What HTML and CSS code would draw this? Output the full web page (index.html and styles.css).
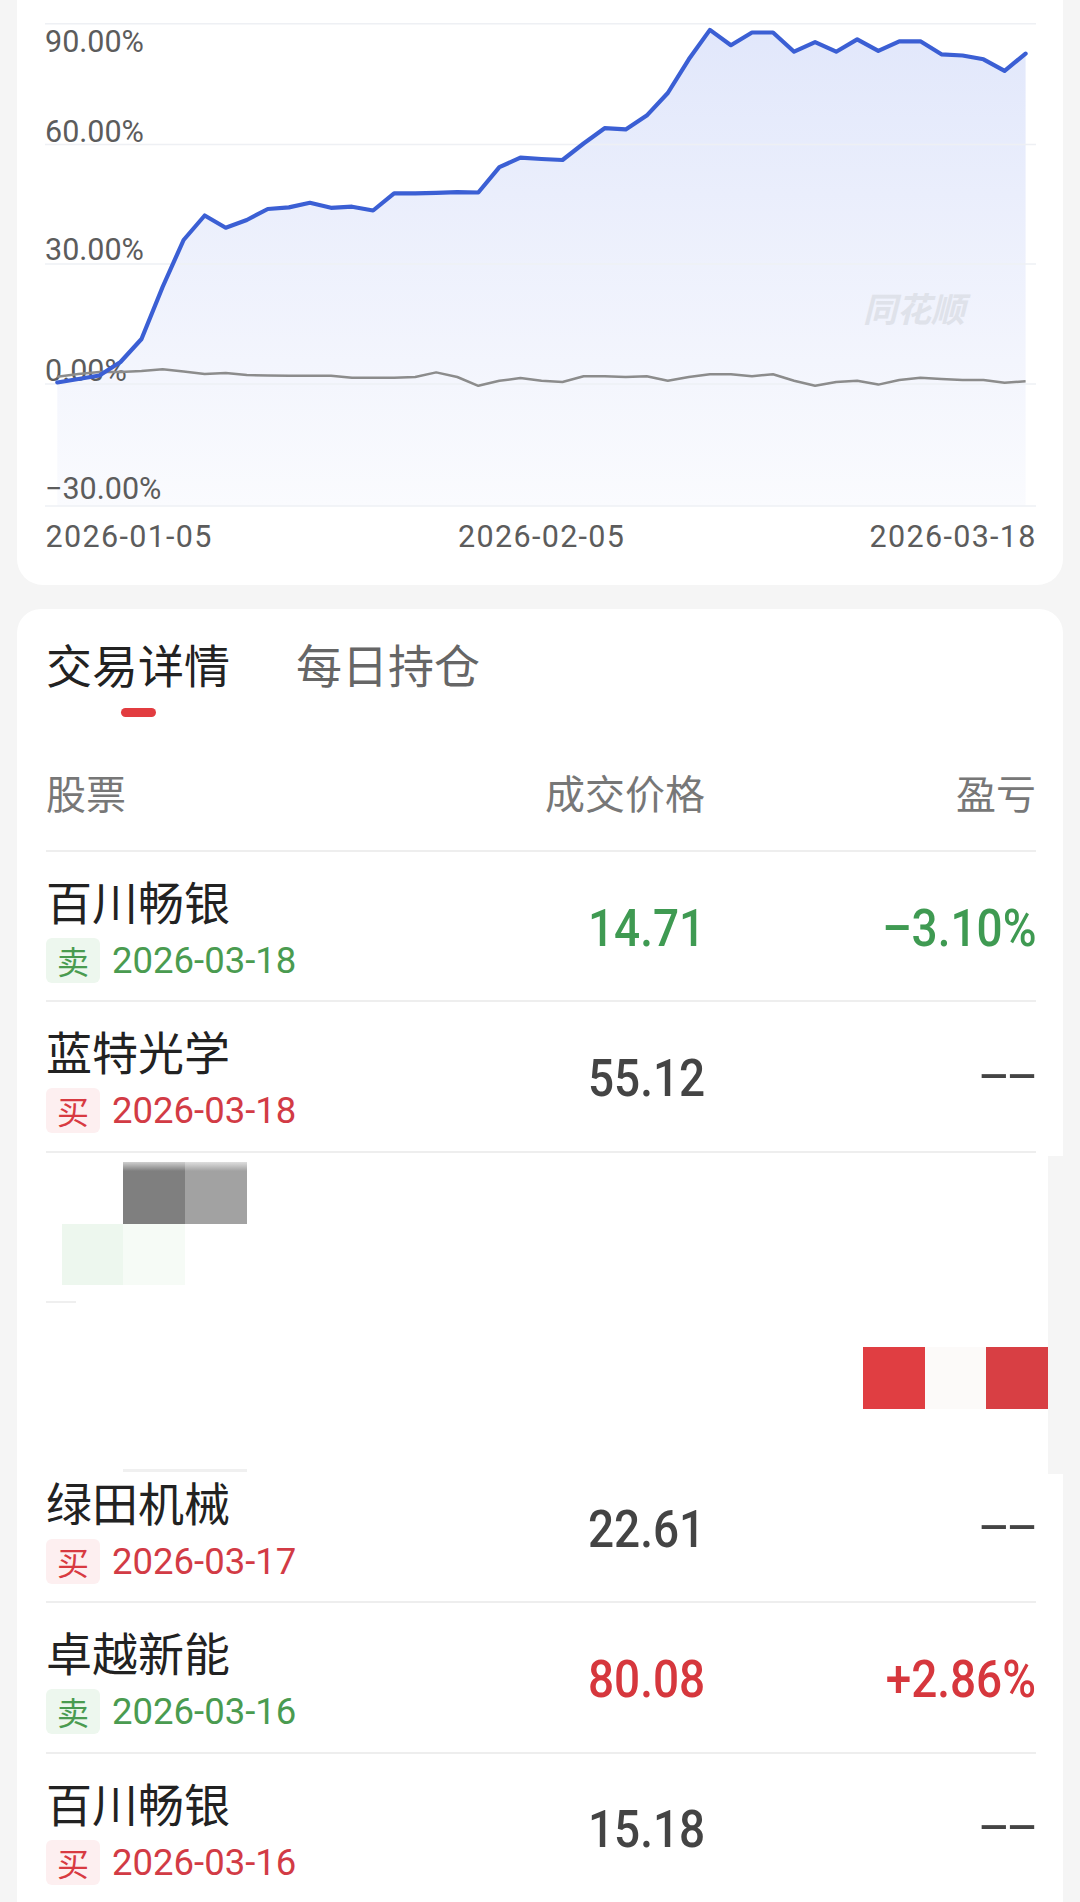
FILE: index.html
```html
<!DOCTYPE html>
<html lang="zh-CN">
<head>
<meta charset="utf-8">
<title>交易详情</title>
<link rel="stylesheet" href="styles.css">
</head>
<body>
<div class="page">
  <section class="card chart-card">
    <svg class="chart" viewBox="17 0 1046 585" width="1046" height="585" xmlns="http://www.w3.org/2000/svg">
      <defs>
        <linearGradient id="fillGrad" gradientUnits="userSpaceOnUse" x1="0" y1="24" x2="0" y2="506">
          <stop offset="0" stop-color="#e1e7fb"/>
          <stop offset="0.7" stop-color="#f3f5fd"/>
          <stop offset="1" stop-color="#fafbfe"/>
        </linearGradient>
      </defs>
      <path class="area" d="M57.3,382.5 L78.4,379 L99.4,375.5 L120.5,362 L141.5,339 L162.6,287 L183.6,240 L204.7,215.5 L225.7,227.7 L246.8,220 L267.8,209 L288.9,207.4 L309.9,202.8 L331,207.8 L352,206.7 L373.1,210.5 L394.1,193.3 L415.2,193.3 L436.2,192.9 L457.3,192.1 L478.3,192.5 L499.4,167.2 L520.4,157.7 L541.5,159 L562.5,160 L583.6,143.5 L604.6,128.2 L625.7,129.4 L646.7,115.6 L667.8,93 L688.8,59.3 L709.9,29.9 L730.9,45.2 L752,32.5 L773,32.5 L794.1,51.7 L815.1,42.1 L836.2,51.7 L857.2,39.4 L878.3,50.9 L899.3,41.3 L920.4,41.3 L941.4,54.3 L962.5,55.5 L983.5,59.3 L1004.6,70.8 L1025.6,53.6 L1025.6,505.9 L57.3,505.9 Z"/>
      <g class="grid">
        <line x1="45" y1="23.7" x2="1036" y2="23.7"/>
        <line x1="45" y1="144.5" x2="1036" y2="144.5"/>
        <line x1="45" y1="264" x2="1036" y2="264"/>
        <line x1="45" y1="384" x2="1036" y2="384"/>
        <line x1="45" y1="505.9" x2="1036" y2="505.9"/>
      </g>
      <text class="watermark" x="863" y="322">同花顺</text>
      <g class="axis">
        <text x="45" y="51.7">90.00%</text>
        <text x="45" y="141.6">60.00%</text>
        <text x="45" y="260.2">30.00%</text>
        <text x="45" y="380.8">0.00%</text>
        <text x="45" y="499.4">−30.00%</text>
        <text x="45.5" y="547" textLength="166" lengthAdjust="spacing">2026-01-05</text>
        <text x="458" y="547" textLength="166" lengthAdjust="spacing">2026-02-05</text>
        <text x="869.5" y="547" textLength="166" lengthAdjust="spacing">2026-03-18</text>
      </g>
      <polyline class="bench" points="57.3,376.7 78.4,374 99.4,372 120.5,372 141.5,371 162.6,369.3 183.6,371.5 204.7,373.9 225.7,373 246.8,375 267.8,375.5 288.9,375.8 309.9,375.8 331,375.8 352,377.7 373.1,377.7 394.1,377.7 415.2,377 436.2,372.4 457.3,377 478.3,385.8 499.4,380.8 520.4,378 541.5,380.8 562.5,382 583.6,376.2 604.6,376.2 625.7,377 646.7,376.2 667.8,380.8 688.8,377 709.9,374.3 730.9,374.3 752,376.2 773,374.3 794.1,380.8 815.1,385.8 836.2,382 857.2,380.8 878.3,384.6 899.3,380 920.4,377.7 941.4,378.9 962.5,380 983.5,380 1004.6,382.7 1025.6,381.2"/>
      <polyline class="profit" points="57.3,382.5 78.4,379 99.4,375.5 120.5,362 141.5,339 162.6,287 183.6,240 204.7,215.5 225.7,227.7 246.8,220 267.8,209 288.9,207.4 309.9,202.8 331,207.8 352,206.7 373.1,210.5 394.1,193.3 415.2,193.3 436.2,192.9 457.3,192.1 478.3,192.5 499.4,167.2 520.4,157.7 541.5,159 562.5,160 583.6,143.5 604.6,128.2 625.7,129.4 646.7,115.6 667.8,93 688.8,59.3 709.9,29.9 730.9,45.2 752,32.5 773,32.5 794.1,51.7 815.1,42.1 836.2,51.7 857.2,39.4 878.3,50.9 899.3,41.3 920.4,41.3 941.4,54.3 962.5,55.5 983.5,59.3 1004.6,70.8 1025.6,53.6"/>
    </svg>
  </section>

  <section class="card trades-card">
    <div class="tabs">
      <div class="tab active">交易详情<span class="tab-bar"></span></div>
      <div class="tab">每日持仓</div>
    </div>

    <div class="thead">
      <div>股票</div>
      <div class="num">成交价格</div>
      <div class="num">盈亏</div>
    </div>

    <div class="trow">
      <div class="stock">
        <div class="name">百川畅银</div>
        <div class="meta"><span class="badge sell">卖</span><span class="date sell">2026-03-18</span></div>
      </div>
      <div class="price down"><span class="fig">14.71</span></div>
      <div class="price down"><span class="fig">–3.10%</span></div>
    </div>

    <div class="trow">
      <div class="stock">
        <div class="name">蓝特光学</div>
        <div class="meta"><span class="badge buy">买</span><span class="date buy">2026-03-18</span></div>
      </div>
      <div class="price flat"><span class="fig">55.12</span></div>
      <div class="price flat"><span class="fig nil">--</span></div>
    </div>

    <div class="censored">
      <span class="tile t-dark"></span>
      <span class="tile t-grey"></span>
      <span class="tile t-green1"></span>
      <span class="tile t-green2"></span>
      <span class="tile t-red1"></span>
      <span class="tile t-pale"></span>
      <span class="tile t-red2"></span>
      <span class="frag"></span>
      <span class="frag-low"></span>
      <span class="edge"></span>
    </div>

    <div class="trow">
      <div class="stock">
        <div class="name">绿田机械</div>
        <div class="meta"><span class="badge buy">买</span><span class="date buy">2026-03-17</span></div>
      </div>
      <div class="price flat"><span class="fig">22.61</span></div>
      <div class="price flat"><span class="fig nil">--</span></div>
    </div>

    <div class="trow">
      <div class="stock">
        <div class="name">卓越新能</div>
        <div class="meta"><span class="badge sell">卖</span><span class="date sell">2026-03-16</span></div>
      </div>
      <div class="price up"><span class="fig">80.08</span></div>
      <div class="price up"><span class="fig">+2.86%</span></div>
    </div>

    <div class="trow">
      <div class="stock">
        <div class="name">百川畅银</div>
        <div class="meta"><span class="badge buy">买</span><span class="date buy">2026-03-16</span></div>
      </div>
      <div class="price flat"><span class="fig">15.18</span></div>
      <div class="price flat"><span class="fig nil">--</span></div>
    </div>
  </section>
</div>
</body>
</html>
```

FILE: styles.css
```css
html, body {
  margin: 0;
  padding: 0;
  background: #f5f5f5;
  overflow: hidden;
}

body {
  font-family: "Noto Sans CJK SC", "Noto Sans", sans-serif;
  color: #222;
}

.page {
  width: 1080px;
  height: 1902px;
  overflow: hidden;
}

.card {
  background: #fff;
  margin: 0 17px;
}

/* ---------- chart card ---------- */
.chart-card {
  height: 585px;
  border-radius: 0 0 26px 26px;
}

.chart {
  display: block;
}

.area {
  fill: url(#fillGrad);
}

.grid line {
  stroke: #eef0f4;
  stroke-width: 1.5;
}

.watermark {
  font-family: "Noto Sans CJK SC", sans-serif;
  font-size: 34px;
  font-weight: 700;
  font-style: italic;
  fill: #dfe2ea;
}

.axis text {
  font-family: Roboto, "Noto Sans", sans-serif;
  font-size: 30.5px;
  fill: #5c5c5c;
}

.bench {
  fill: none;
  stroke: #8c8c8c;
  stroke-width: 2.5;
  stroke-linejoin: round;
}

.profit {
  fill: none;
  stroke: #3b5fd4;
  stroke-width: 4.2;
  stroke-linejoin: round;
  stroke-linecap: round;
}

/* ---------- trades card ---------- */
.trades-card {
  margin-top: 24px;
  border-radius: 24px 24px 0 0;
  padding: 24px 27px 0 29px;
}

.tabs {
  display: flex;
  align-items: flex-start;
  gap: 66px;
}

.tab {
  display: flex;
  flex-direction: column;
  align-items: center;
  font-size: 46px;
  line-height: 60px;
  color: #666;
}

.tab.active {
  color: #222;
}

.tab-bar {
  width: 35px;
  height: 9px;
  border-radius: 4.5px;
  background: #e23c40;
  margin-top: 15px;
}

.thead {
  display: grid;
  grid-template-columns: 1fr 260px 331px;
  margin-top: 51px;
  padding-bottom: 34px;
  border-bottom: 2px solid #eeeeee;
  font-size: 40px;
  line-height: 48px;
  color: #777;
}

.num {
  text-align: right;
}

.trow {
  display: grid;
  grid-template-columns: 1fr 260px 331px;
  align-items: center;
  padding: 22px 0 17.3px;
  border-bottom: 2px solid #eeeeee;
}

.name {
  font-size: 46px;
  line-height: 52px;
  color: #222;
}

.meta {
  display: flex;
  align-items: center;
  height: 45px;
  margin-top: 12px;
}

.badge {
  width: 54px;
  height: 45px;
  border-radius: 6px;
  display: flex;
  align-items: center;
  justify-content: center;
  font-size: 32px;
  line-height: 45px;
}

.badge.sell {
  background: #edf7ee;
  color: #4a9b50;
}

.badge.buy {
  background: #fdeff0;
  color: #d83a41;
}

.date {
  font-family: Roboto, "Noto Sans", sans-serif;
  font-size: 36.5px;
  line-height: 45px;
  margin-left: 12px;
}

.date.sell {
  color: #4a9b50;
}

.date.buy {
  color: #d23b45;
}

.price {
  font-family: Roboto, "Noto Sans", sans-serif;
  font-weight: 500;
  font-size: 51px;
  line-height: 60px;
  text-align: right;
}

.fig {
  display: inline-block;
  transform: scaleX(0.9);
  transform-origin: right center;
}

.price.down {
  color: #3f9a52;
}

.price.up {
  color: #d6373d;
}

.price.flat {
  color: #444;
}

.fig.nil {
  font-weight: 400;
  transform: translateY(-4px) scaleX(2.0);
}

/* ---------- masked (mosaic) rows ---------- */
.censored {
  position: relative;
  height: 300.5px;
}

.tile {
  position: absolute;
  width: 62px;
  height: 62px;
}

.t-dark {
  left: 77px;
  top: 9px;
  background: linear-gradient(#cfcfcf, #7f7f7f 9px);
}

.t-grey {
  left: 139px;
  top: 9px;
  background: linear-gradient(#dedede, #a2a2a2 9px);
}

.t-green1 {
  left: 16px;
  top: 71px;
  width: 61px;
  height: 61px;
  background: #edf7ee;
}

.t-green2 {
  left: 77px;
  top: 71px;
  height: 61px;
  background: #f6fbf6;
}

.t-red1 {
  left: 817px;
  top: 194px;
  background: #e03e42;
}

.t-pale {
  left: 879px;
  top: 194px;
  width: 61px;
  background: #fcfaf9;
}

.t-red2 {
  left: 940px;
  top: 194px;
  background: #d83f44;
}

.frag {
  position: absolute;
  left: 0;
  top: 148px;
  width: 30px;
  height: 2px;
  background: #efefef;
}

.frag-low {
  position: absolute;
  left: 77px;
  top: 316px;
  width: 124px;
  height: 3px;
  background: #f0f0f0;
}

.edge {
  position: absolute;
  left: 1002px;
  top: 3px;
  width: 16px;
  height: 318px;
  background: #f5f5f5;
}
```
